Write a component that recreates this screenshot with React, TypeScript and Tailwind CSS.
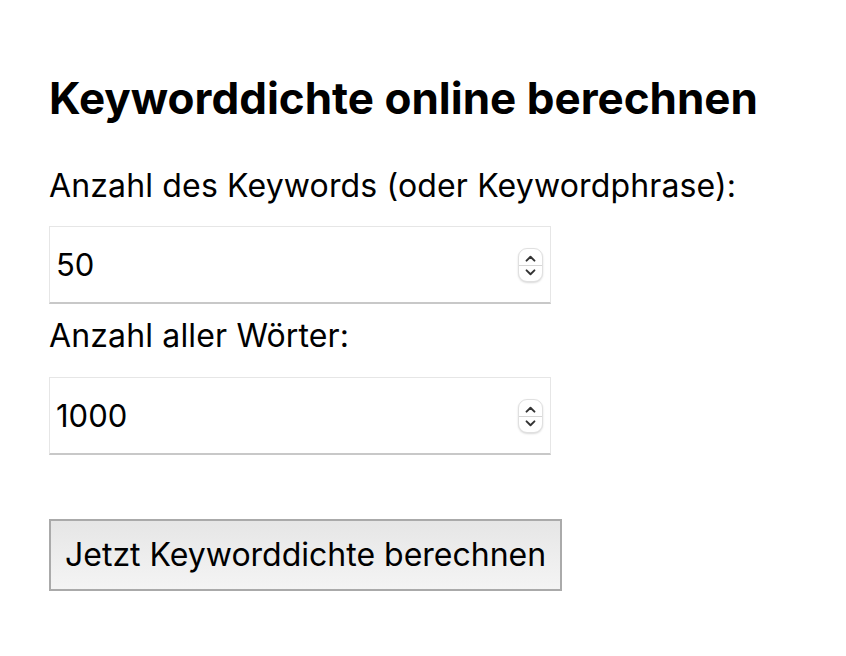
function Spinner() {
  return (
    <div className="pointer-events-none absolute right-[8px] top-1/2 flex h-[34px] w-[25px] -translate-y-1/2 flex-col items-center justify-center rounded-[9px] border border-[#e0e0e0] bg-white shadow-[0_1px_2px_rgba(0,0,0,0.15)]">
      <svg viewBox="0 0 12 8" className="mb-[3px] h-[7px] w-[11px]" fill="none" stroke="#333" strokeWidth={2.2} strokeLinecap="round" strokeLinejoin="round">
        <polyline points="1.5,6.5 6,2 10.5,6.5" />
      </svg>
      <div className="h-px w-full bg-[#d6d6d6]" />
      <svg viewBox="0 0 12 8" className="mt-[3px] h-[7px] w-[11px]" fill="none" stroke="#333" strokeWidth={2.2} strokeLinecap="round" strokeLinejoin="round">
        <polyline points="1.5,1.5 6,6 10.5,1.5" />
      </svg>
    </div>
  );
}

function NumberField({ value }: { value: string }) {
  return (
    <div className="relative w-[502px]">
      <input
        type="text"
        defaultValue={value}
        className="block h-[78px] w-full border border-b-2 border-[#e6e6e6] border-b-[#c8c8c8] bg-white pl-[6px] text-[31px] text-black outline-none"
      />
      <Spinner />
    </div>
  );
}

export default function App() {
  return (
    <div className="min-h-screen bg-white pl-[49px] pt-[71px] font-['Inter','Noto_Sans',sans-serif] text-black">
      <h1 className="text-[44px] font-bold leading-[54px]">Keyworddichte online berechnen</h1>
      <form className="mt-[41px] flex flex-col" onSubmit={(e) => e.preventDefault()}>
        <label className="text-[32px] leading-[40px] tracking-[0.15px]">Anzahl des Keywords (oder Keywordphrase):</label>
        <div className="mt-[20px]">
          <NumberField value="50" />
        </div>
        <label className="mt-[12px] text-[32px] leading-[40px] tracking-[0.15px]">Anzahl aller Wörter:</label>
        <div className="mt-[21px]">
          <NumberField value="1000" />
        </div>
        <div className="mt-[64px]">
          <button
            type="submit"
            className="h-[72px] border-2 border-[#aaaaaa] bg-gradient-to-b from-[#e6e6e6] to-[#f4f4f4] px-[14px] text-[32px] text-black"
          >
            Jetzt Keyworddichte berechnen
          </button>
        </div>
      </form>
    </div>
  );
}
